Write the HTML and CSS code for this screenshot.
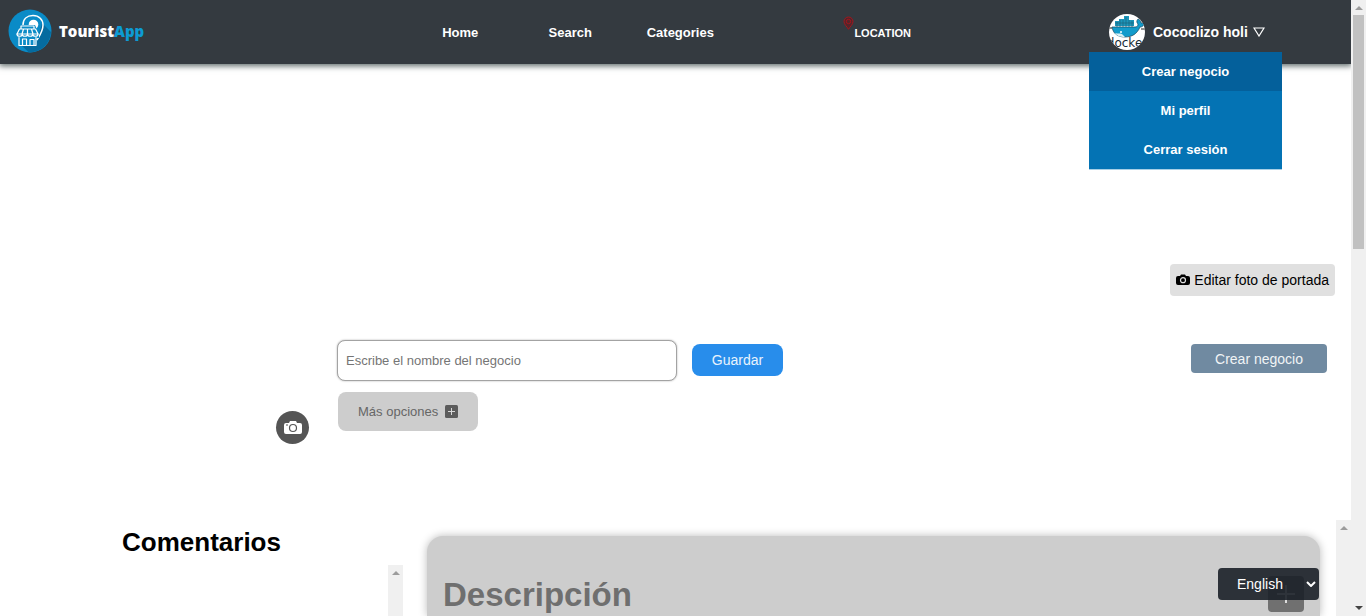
FILE: index.html
```html
<!DOCTYPE html>
<html lang="es">
<head>
<meta charset="utf-8">
<title>TouristApp</title>
<link rel="stylesheet" href="styles.css">
</head>
<body>
<div class="page">
  <header class="header">
    <a class="brand" href="#">
      <svg class="brand-mark" viewBox="0 0 44 44" aria-hidden="true">
        <circle cx="22" cy="22" r="21.500" fill="#0a8bc7"/>
        <path d="M34 14 43 23A21.500 21.500 0 0 1 21 43.500L13 36 28 36Z" fill="#056b9f"/>
        <path d="M15 16C15 10 19 6.500 25 6.500c6 0 10 4 10 9.500 0 6-3 10-6 15" fill="none" stroke="#fff" stroke-width="1.500"/>
        <circle cx="25.500" cy="15.500" r="4.800" fill="#fff"/>
        <path d="M12 16h15l4 9v4H8v-4z" fill="#0a8bc7"/>
        <g fill="none" stroke="#fff" stroke-width="1.200" stroke-linejoin="round" stroke-linecap="round">
          <path d="M13 17h13v3H13zM11.500 20h16l2.500 5H9zM15.500 20l-1.500 5M19.500 20v5M23.500 20l1.500 5"/>
          <path d="M9 25c0 3 5.200 3 5.200 0 0 3 5.300 3 5.300 0 0 3 5.300 3 5.300 0 0 3 5.200 3 5.200 0"/>
          <path d="M11 28.500v8h17v-8M14.500 36v-6h4v6M22 30.500h4v6h-4z"/>
        </g>
      </svg>
      <span class="brand-name">Tourist<span class="brand-accent">App</span></span>
    </a>
    <nav class="nav">
      <a href="#">Home</a>
      <a href="#">Search</a>
      <a href="#">Categories</a>
    </nav>
    <a class="location" href="#">
      <svg class="pin" viewBox="0 0 11 14" aria-hidden="true"><path d="M5.500 13.300C4 10.500 1 8.500 1 5.500a4.500 4.500 0 0 1 9 0c0 3-3 5-4.500 7.800z" fill="#54252b" stroke="#a3161d"/><circle cx="5.500" cy="5.500" r="2.200" fill="none" stroke="#a3161d"/></svg>
      <span>LOCATION</span>
    </a>
    <div class="user">
      <button class="user-button" type="button" aria-haspopup="true" aria-expanded="true">
        <svg class="avatar" viewBox="0 0 36 36" aria-hidden="true">
          <defs><clipPath id="round"><circle cx="18" cy="18" r="18"/></clipPath></defs>
          <g clip-path="url(#round)">
            <path fill="#fff" d="M0 0h36v36H0z"/>
            <path d="M6 12V7h4V5h5V2h5v4h5v6z" fill="#1c95ba"/>
            <path d="M8 8v5M11 6v7M14 6v7M17 3v10M20 6v7M23 7v6M6 9h19" stroke="#1b6480" stroke-width=".7"/>
            <path d="M3 13h23c2 0 3-1 3-3-2-2-1-4 0-5 2 1 3 2 3 4h3c0 3-2 4-4 4-3 7-8 10-15 10C8 23 4 19 3 13z" fill="#129bcb" stroke="#17485d" stroke-width=".7"/>
            <path d="M6 19c3 1 5 0 7 1 1 1 2 2 3 3-5 0-8-1-10-4z" fill="#d8f0f5"/>
            <circle cx="12" cy="18" r="1" fill="#fff"/>
            <path d="M0 14h3M32 15h4" stroke="#222"/>
            <text x="18" y="33" class="avatar-word">docker</text>
          </g>
        </svg>
        <span>Cococlizo holi</span>
        <svg class="caret" viewBox="0 0 12 10" aria-hidden="true"><path d="M1 1h10L6 9z" fill="none" stroke="#fff" stroke-width="1.200"/></svg>
      </button>
      <ul class="menu">
        <li><a class="active" href="#">Crear negocio</a></li>
        <li><a href="#">Mi perfil</a></li>
        <li><a href="#">Cerrar sesión</a></li>
      </ul>
    </div>
  </header>

  <main class="content">
    <section class="cover">
      <button class="cover-button" type="button">
        <svg class="camera-small" viewBox="0 0 14 12" aria-hidden="true"><path d="M2 2h2l1-1.500h4L10 2h2q2 0 2 2v5q0 2-2 2H2q-2 0-2-2V4q0-2 2-2z"/><circle cx="7" cy="6.200" r="2.500" fill="none" stroke="#e0e0e0" stroke-width="1.200"/></svg>
        Editar foto de portada
      </button>
    </section>

    <section class="profile">
      <button class="photo-button" type="button" aria-label="Cambiar foto">
        <svg class="camera" viewBox="0 0 18 14" aria-hidden="true"><path d="M2 2h3l1-2h6l1 2h3q2 0 2 2v7q0 2-2 2H2q-2 0-2-2V4q0-2 2-2z" fill="#fff"/><circle cx="9" cy="7" r="3.500" fill="none" stroke="#555" stroke-width="1.200"/><path d="M2 4h2" stroke="#555"/></svg>
      </button>
      <form class="business">
        <div class="business-row">
          <input class="name-input" type="text" placeholder="Escribe el nombre del negocio" aria-label="Nombre del negocio">
          <button class="save" type="button">Guardar</button>
        </div>
        <button class="more" type="button">Más opciones
          <svg class="plus" viewBox="0 0 13 13" aria-hidden="true"><rect width="13" height="13" rx="1.500" fill="#5c5c5c"/><path d="M6.500 3v7M3 6.500h7" stroke="#d8d8d8"/></svg>
        </button>
      </form>
      <button class="create" type="button">Crear negocio</button>
    </section>

    <div class="columns">
      <section class="comments">
        <h2>Comentarios</h2>
        <div class="comment-list"><div class="track"><span class="arrow-up"></span></div></div>
      </section>
      <section class="details">
        <article class="card">
          <h1>Descripción</h1>
          <button class="add" type="button" aria-label="Agregar"><svg viewBox="0 0 36 36" aria-hidden="true"><path d="M18 9v18M9 18h18" stroke="#ddd" stroke-width="2"/></svg></button>
        </article>
        <div class="track"><span class="arrow-up"></span></div>
      </section>
    </div>
  </main>

  <div class="language">
    <select aria-label="Idioma"><option>English</option><option>Español</option></select>
    <svg class="chevron" viewBox="0 0 10 6" aria-hidden="true"><path d="M1 1l4 4 4-4" fill="none" stroke="#fff" stroke-width="2"/></svg>
  </div>
</div>
<div class="track page-track"><span class="arrow-up"></span><span class="thumb"></span><span class="arrow-down"></span></div>
</body>
</html>
```

FILE: styles.css
```css
* { box-sizing: border-box; }

body {
  margin: 0;
  display: flex;
  height: 100vh;
  overflow: hidden;
  background: #fff;
  color: #000;
  font-family: "Liberation Sans", Arial, sans-serif;
  font-size: 14px;
}

button, input, select { font: inherit; border: 0; }
button { cursor: pointer; }
a { color: inherit; text-decoration: none; }
svg { display: block; flex: none; }

.page {
  position: relative;
  flex: 1;
  min-width: 0;
  display: flex;
  flex-direction: column;
  overflow: hidden;
}

/* Header */
.header {
  position: relative;
  z-index: 2;
  flex: none;
  display: flex;
  height: 64px;
  background: #343a40;
  box-shadow: 0 1px 6px 1px #5c6868;
  color: #fff;
  font-size: 13px;
  font-weight: bold;
}

.brand {
  display: flex;
  align-items: center;
  gap: 7px;
  width: 30%;
  padding: 0 8px 2px;
}
.brand-mark { width: 44px; height: 44px; }
.brand-name { font: 800 15px/20px "Open Sans", sans-serif; }
.brand-accent { color: #0d9bd3; }

.nav { display: grid; grid-template-columns: repeat(3, 110px); }
.nav a { text-align: center; line-height: 65px; }

.location {
  display: flex;
  align-items: flex-start;
  margin-left: 8%;
  padding-top: 16px;
  font-size: 11px;
}
.location span { padding-top: 10px; line-height: 14px; }
.pin { width: 11px; height: 14px; }

.user {
  position: relative;
  width: 193px;
  margin: 0 69px 0 auto;
}
.user-button {
  display: flex;
  align-items: center;
  gap: 5px;
  height: 64px;
  padding: 0 0 0 20px;
  background: none;
  color: #fff;
  font-size: 14px;
  font-weight: bold;
  white-space: nowrap;
}
.user-button span { padding-left: 3px; }
.avatar { width: 36px; height: 36px; }
.avatar-word { font: 12px "DejaVu Sans", sans-serif; text-anchor: middle; fill: #172b36; }
.caret { width: 12px; height: 10px; }

.menu {
  position: absolute;
  top: 52px;
  left: 0;
  width: 100%;
  margin: 0;
  padding: 0;
  list-style: none;
  background: #0473b4;
  border-bottom: 1px solid #a8cfe6;
}
.menu a { display: block; line-height: 39px; text-align: center; }
.menu .active { background: #04609b; }

/* Cover and profile */
.content {
  flex: 1;
  min-height: 0;
  display: flex;
  flex-direction: column;
}
.cover {
  flex: none;
  display: flex;
  justify-content: flex-end;
  padding: 200px 16px 0;
}
.cover-button {
  display: flex;
  align-items: center;
  gap: 4px;
  height: 32px;
  padding: 0 6px;
  border-radius: 4px;
  background: #e0e0e0;
  color: #000;
}
.camera-small { width: 14px; height: 12px; }

.profile {
  flex: none;
  display: flex;
  align-items: flex-start;
  height: 224px;
  padding: 44px 24px 0 276px;
}
.photo-button {
  display: grid;
  place-items: center;
  width: 33px;
  height: 33px;
  margin: 71px 28px 0 0;
  padding: 0;
  border-radius: 50%;
  background: #555;
}
.camera { width: 18px; height: 14px; }
.business-row { display: flex; align-items: flex-start; gap: 15px; }
.name-input {
  width: 340px;
  height: 41px;
  padding: 0 8px;
  border: 1px solid #a3a3a3;
  border-radius: 8px;
  box-shadow: 0 0 2px #aaa;
  font-size: 13px;
}
.name-input::placeholder { color: #757575; }
.save {
  width: 91px;
  height: 32px;
  margin-top: 4px;
  border-radius: 8px;
  background: #288deb;
  color: #e8f3fd;
}
.more {
  display: flex;
  align-items: center;
  gap: 7px;
  height: 39px;
  margin: 11px 0 0 1px;
  padding: 0 20px;
  border-radius: 8px;
  background: #cdcdcd;
  color: #666;
  font-size: 13px;
}
.plus { width: 13px; height: 13px; }
.create {
  width: 136px;
  height: 29px;
  margin: 4px 0 0 auto;
  border-radius: 4px;
  background: #708aa1;
  color: #f1f4f6;
}

/* Lower columns */
.columns { flex: 1; min-height: 0; display: flex; }
.comments {
  display: flex;
  flex-direction: column;
  width: 403px;
}
.comments h2 {
  margin: 0;
  font-size: 26px;
  line-height: 45px;
  text-align: center;
}
.comment-list { flex: 1; display: flex; justify-content: flex-end; }
.details { flex: 1; display: flex; }
.card {
  flex: 1;
  display: flex;
  align-items: flex-start;
  justify-content: space-between;
  margin: 16px 16px 0 24px;
  padding: 40px 16px 0;
  border-radius: 16px 16px 0 0;
  background: #cdcdcd;
  box-shadow: 0 0 8px #bbb;
}
.card h1 {
  margin: 0;
  color: #6f6f6f;
  font-size: 33px;
  line-height: 38px;
}
.add {
  width: 36px;
  height: 36px;
  padding: 0;
  border-radius: 4px;
  background: #707070;
}

.language {
  position: absolute;
  right: 32px;
  bottom: 16px;
  width: 101px;
}
.language select {
  appearance: none;
  display: block;
  width: 100%;
  height: 32px;
  padding: 0 19px;
  border-radius: 4px;
  background: rgba(27, 32, 40, .9);
  color: #fff;
}
.chevron {
  position: absolute;
  top: 13px;
  right: 3px;
  width: 10px;
  height: 6px;
  pointer-events: none;
}

/* Scroll tracks */
.track {
  flex: none;
  display: flex;
  flex-direction: column;
  align-items: center;
  width: 15px;
  background: #f0f0f0;
}
.arrow-up {
  margin: 6px 0 5px;
  border: 4px solid transparent;
  border-top: 0;
  border-bottom-color: #9c9c9c;
}
.thumb { width: 11px; height: 38%; background: #c1c1c1; }
.arrow-down {
  margin: auto 0 6px;
  border: 4px solid transparent;
  border-bottom: 0;
  border-top-color: #444;
}
```
